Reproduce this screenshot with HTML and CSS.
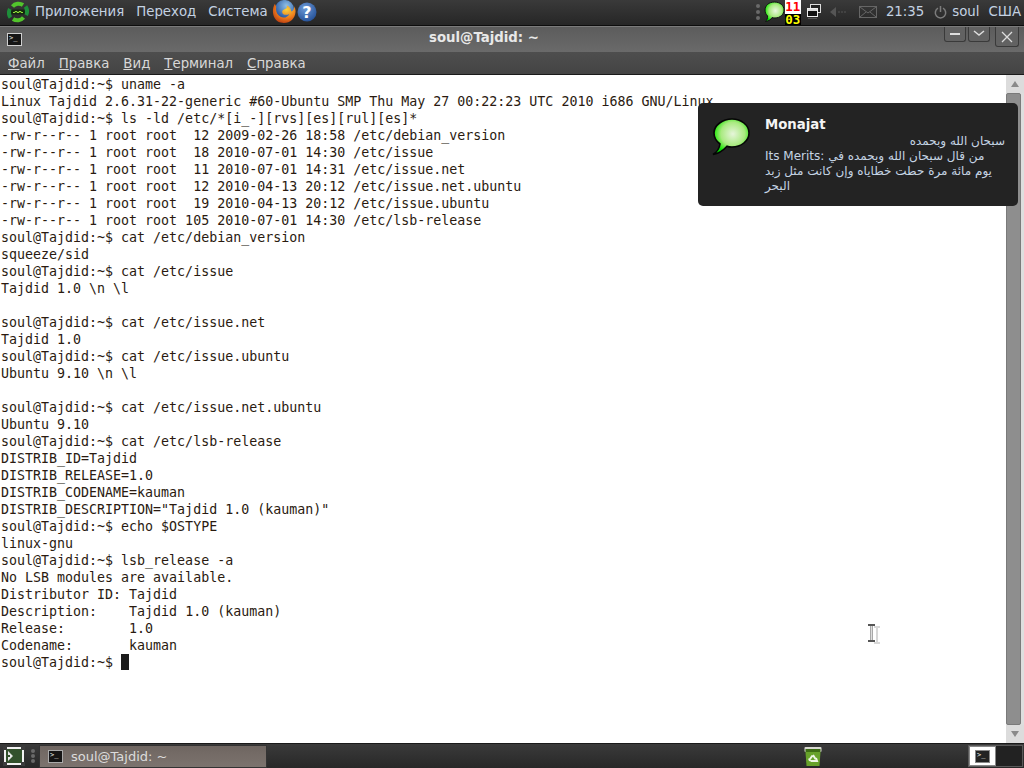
FILE: index.html
```html
<!DOCTYPE html>
<html lang="ru">
<head>
<meta charset="utf-8">
<title>soul@Tajdid: ~</title>
<link rel="stylesheet" href="styles.css">
</head>
<body>
<div class="desktop">
  <header class="top-panel">
    <svg class="logo" width="22" height="22" viewBox="0 0 22 22"><path d="M5.500 5.500A8 8 0 0 1 16 4" fill="none" stroke="#52c42c" stroke-width="4"/><path d="M16.500 16.500A8 8 0 0 1 6 18" fill="none" stroke="#52c42c" stroke-width="4"/><path d="M18.500 5.500A8 8 0 0 1 19 14" fill="none" stroke="#1e8f3a" stroke-width="4"/><path d="M3.500 16.500A8 8 0 0 1 3 8" fill="none" stroke="#1e8f3a" stroke-width="4"/><rect x="4" y="8.500" width="14" height="5" rx="2" fill="#14280f"/><path d="M6 11.500h2v-1h2v1h2v-1h2v1h2" fill="none" stroke="#8fe03a"/></svg>
    <nav class="top-menu"><span>Приложения</span><span>Переход</span><span>Система</span></nav>
    <svg class="launcher" width="25" height="25" viewBox="0 0 26 26"><defs><radialGradient id="ffg" cx="0.6" cy="0.3" r="0.8"><stop offset="0" stop-color="#f9d23c"/><stop offset="0.55" stop-color="#ec7a1c"/><stop offset="1" stop-color="#b2330f"/></radialGradient><radialGradient id="globe" cx="0.6" cy="0.3" r="0.7"><stop offset="0" stop-color="#8fc0e8"/><stop offset="1" stop-color="#1f4f9c"/></radialGradient></defs><circle cx="14" cy="11" r="10" fill="url(#globe)"/><path d="M4 5C0 12 2 22 10 24.500c8 2 15-3 15.500-11 .2-2-.2-4-1.200-6 0 3-1.500 5-3.300 5.500 0-3-2-5.500-5-6.500 1.500 2.500-.5 4-2.500 4.500-2 1-2.500 3-1 4.500 2 1.500 4.500 1 6.500 0-1 3-5.500 5-9 3C6 16.500 4.500 12 5.500 8z" fill="url(#ffg)"/></svg>
    <svg class="launcher help" width="20" height="20" viewBox="0 0 20 20"><defs><radialGradient id="hg" cx="0.4" cy="0.3" r="0.8"><stop offset="0" stop-color="#6d9bd8"/><stop offset="1" stop-color="#1e4a92"/></radialGradient></defs><circle cx="10" cy="10" r="9.500" fill="url(#hg)"/><text x="10" y="15.500" text-anchor="middle" class="help-mark">?</text></svg>
    <div class="tray">
      <span class="grip"><i></i><i></i><i></i></span>
      <svg class="tray-bubble" width="22" height="22" viewBox="0 0 22 22"><defs><radialGradient id="bg1" cx="0.55" cy="0.45" r="0.55"><stop offset="0" stop-color="#eaf7e0"/><stop offset="0.6" stop-color="#a9ea80"/><stop offset="0.92" stop-color="#38e820"/><stop offset="1" stop-color="#00dc00"/></radialGradient></defs><path d="M11.500 1C17 1 21 4.500 21 9s-4 8-9 8c-1 0-2 0-3-.4C8 18.500 6 20 2.500 20.500 4 19 4.600 17.500 4.600 15 3 13.500 2 11.500 2 9 2 4.500 6 1 11.500 1z" fill="url(#bg1)" stroke="#111" stroke-width="1"/></svg>
      <div class="counter"><b class="count-a">11</b><b class="count-b">03</b></div>
      <svg class="tray-icon" width="16" height="16" viewBox="0 0 16 16"><rect x="4.500" y="0.500" width="10" height="8" fill="#222" stroke="#ddd"/><rect x="1.500" y="4.500" width="10" height="8" fill="#111" stroke="#eee"/><rect x="2" y="5" width="9" height="2" fill="#ddd"/><rect x="2" y="14" width="9" height="1" fill="#555"/></svg>
      <svg class="tray-icon arrow-icon" width="18" height="14" viewBox="0 0 18 14"><path d="M1 7l6-5v10z" fill="#555"/><path d="M9 7h2M12 7h2M15 7h2" stroke="#555"/></svg>
      <svg class="tray-icon mail-icon" width="18" height="12" viewBox="0 0 18 12"><rect x="0.500" y="0.500" width="17" height="11" fill="none" stroke="#666"/><path d="M1 1l8 6 8-6M1 11l6-5M17 11l-6-5" fill="none" stroke="#666"/></svg>
      <span class="clock">21:35</span>
      <svg class="power" width="13" height="14" viewBox="0 0 13 14"><path d="M4 3.200a5.200 5.200 0 1 0 5 0M6.500 1v6" fill="none" stroke="#7c7c7c" stroke-width="1.500"/></svg>
      <span class="user">soul</span>
      <span class="layout">США</span>
    </div>
  </header>

  <main class="window">
    <div class="titlebar">
      <span class="win-icon"><span>&gt;_</span></span>
      <h1 class="win-title">soul@Tajdid: ~</h1>
      <div class="win-buttons">
        <span class="win-btn"><svg width="12" height="12" viewBox="0 0 12 12"><path d="M1 6h10" stroke="#ddd" stroke-width="2"/></svg></span>
        <span class="win-btn"><svg width="12" height="12" viewBox="0 0 12 12"><path d="M1 3l5 4 5-4" fill="none" stroke="#ddd" stroke-width="1.500"/></svg></span>
        <span class="win-btn close"><svg width="12" height="12" viewBox="0 0 12 12"><path d="M1 1l10 10M11 1L1 11" stroke="#ddd" stroke-width="1.300"/></svg></span>
      </div>
    </div>
    <div class="menubar">
      <span><u>Ф</u>айл</span><span><u>П</u>равка</span><span><u>В</u>ид</span><span><u>Т</u>ерминал</span><span><u>С</u>правка</span>
    </div>
    <div class="term-area">
<pre class="term">soul@Tajdid:~$ uname -a
Linux Tajdid 2.6.31-22-generic #60-Ubuntu SMP Thu May 27 00:22:23 UTC 2010 i686 GNU/Linux
soul@Tajdid:~$ ls -ld /etc/*[i_-][rvs][es][rul][es]*
-rw-r--r-- 1 root root  12 2009-02-26 18:58 /etc/debian_version
-rw-r--r-- 1 root root  18 2010-07-01 14:30 /etc/issue
-rw-r--r-- 1 root root  11 2010-07-01 14:31 /etc/issue.net
-rw-r--r-- 1 root root  12 2010-04-13 20:12 /etc/issue.net.ubuntu
-rw-r--r-- 1 root root  19 2010-04-13 20:12 /etc/issue.ubuntu
-rw-r--r-- 1 root root 105 2010-07-01 14:30 /etc/lsb-release
soul@Tajdid:~$ cat /etc/debian_version
squeeze/sid
soul@Tajdid:~$ cat /etc/issue
Tajdid 1.0 \n \l

soul@Tajdid:~$ cat /etc/issue.net
Tajdid 1.0
soul@Tajdid:~$ cat /etc/issue.ubuntu
Ubuntu 9.10 \n \l

soul@Tajdid:~$ cat /etc/issue.net.ubuntu
Ubuntu 9.10
soul@Tajdid:~$ cat /etc/lsb-release
DISTRIB_ID=Tajdid
DISTRIB_RELEASE=1.0
DISTRIB_CODENAME=kauman
DISTRIB_DESCRIPTION="Tajdid 1.0 (kauman)"
soul@Tajdid:~$ echo $OSTYPE
linux-gnu
soul@Tajdid:~$ lsb_release -a
No LSB modules are available.
Distributor ID:	Tajdid
Description:	Tajdid 1.0 (kauman)
Release:	1.0
Codename:	kauman
soul@Tajdid:~$ <span class="cursor"> </span></pre>
      <div class="scrollbar">
        <span class="arrow"><svg width="10" height="8" viewBox="0 0 10 8"><path d="M5 1l4 6H1z" fill="#8a8a8a"/></svg></span>
        <span class="thumb"></span>
        <span class="arrow"><svg width="10" height="8" viewBox="0 0 10 8"><path d="M5 7L1 1h8z" fill="#8a8a8a"/></svg></span>
      </div>
    </div>
  </main>

  <footer class="bottom-panel">
    <svg class="show-desktop" width="22" height="20" viewBox="0 0 22 20"><rect x="2" y="2" width="18" height="16" fill="#33512c" stroke="#f2f2f2" stroke-width="2"/><path d="M5 5v4h2v2H5v4l5-5z" fill="#e8e8e8"/><rect x="0" y="0" width="4" height="4" fill="#3c3c3c"/><rect x="18" y="0" width="4" height="4" fill="#3c3c3c"/><rect x="0" y="16" width="4" height="4" fill="#3c3c3c"/><rect x="18" y="16" width="4" height="4" fill="#3c3c3c"/></svg>
    <span class="grip small"><i></i><i></i><i></i></span>
    <div class="task"><span class="win-icon task-icon"><span>&gt;_</span></span><span>soul@Tajdid: ~</span></div>
    <svg class="trash" width="18" height="20" viewBox="0 0 18 20"><rect x="0.500" y="1" width="17" height="5" rx="1" fill="#d9d9d2"/><rect x="1.500" y="3" width="15" height="3" fill="#3d6d14"/><path d="M1.500 6h15l-1 14h-13z" fill="#67a22a"/><path d="M9 9l2.500 4M11.500 15h-5M6 13l2.500-3.500M12 12l1 3h-2.500M6 15l-1-2.500" fill="none" stroke="#eef6e4" stroke-width="2"/></svg>
    <div class="pager"><span class="page active"><span class="win-icon pager-icon"><span>&gt;_</span></span></span><span class="page"></span></div>
  </footer>

  <aside class="notification">
    <svg class="note-icon" width="38" height="39" viewBox="0 0 38 38"><defs><radialGradient id="bg2" cx="0.55" cy="0.42" r="0.55"><stop offset="0" stop-color="#e6f5da"/><stop offset="0.6" stop-color="#a9ea80"/><stop offset="0.88" stop-color="#3ce820"/><stop offset="1" stop-color="#00e000"/></radialGradient></defs><path d="M20 1.500c9 0 17 6 17 14s-8 14-17 14c-2 0-3.500 0-5-.8C12 32 7 36 1 37c4-2.500 6.500-6.500 7-10.500-4-3-6-6.500-6-11C2 7.500 11 1.500 20 1.500z" fill="url(#bg2)" stroke="#050505" stroke-width="1.600"/></svg>
    <div class="note-text">
      <h2>Monajat</h2>
      <p class="rtl-line">سبحان الله وبحمده</p>
      <p class="note-body">Its Merits: من قال سبحان الله وبحمده في يوم مائة مرة حطت خطاياه وإن كانت مثل زبد البحر</p>
    </div>
  </aside>

  <svg class="ibeam" width="16" height="22" viewBox="0 0 16 22"><path d="M8 3h6M11 3v16M8 19h6" transform="translate(0 1)" fill="none" stroke="#d8d8d8" stroke-width="2"/><path d="M2 1h7M5.500 1v16M2 17h7" transform="translate(0 1)" fill="none" stroke="#555" stroke-width="2"/><path d="M5.500 2v14" transform="translate(0 1)" stroke="#ddd"/></svg>
</div>
</body>
</html>
```

FILE: styles.css
```css
* { box-sizing: border-box; }
html, body { margin: 0; padding: 0; }
body { background: #222; font-family: "DejaVu Sans", sans-serif; }
.desktop { position: relative; width: 1024px; height: 768px; display: flex; flex-direction: column; overflow: hidden; }

.top-panel {
  height: 26px; flex: none; display: flex; align-items: center;
  background: linear-gradient(#3a3a3a, #262626);
  border-bottom: 1px solid #0d0d0d;
  color: #c4d2e2; font-size: 13.300px; padding: 0 0 2px 7px;
}
.logo { flex: none; }
.top-menu { display: flex; gap: 12px; margin-left: 6px; }
.launcher { flex: none; margin-left: 3px; }
.help { margin-left: 1px; }
.help-mark { fill: #fff; font: bold 16px "DejaVu Sans", sans-serif; }
.tray { margin-left: auto; display: flex; align-items: center; height: 100%; }
.grip { display: flex; flex-direction: column; gap: 2px; }
.grip i { display: block; width: 4px; height: 4px; border-radius: 50%; background: #6a6a6a; }
.tray-bubble { margin-left: 3px; }
.counter { width: 16px; height: 25px; display: flex; flex-direction: column; font-family: "DejaVu Sans Mono", monospace; font-weight: bold; font-size: 12.500px; text-align: center; align-self: flex-start; }
.count-a { background: #fff; color: #f00; height: 14px; line-height: 14px; }
.count-b { background: #000; color: #ff0; height: 11px; line-height: 11px; }
.tray-icon { margin-left: 5px; flex: none; }
.arrow-icon { margin-left: 7px; }
.mail-icon { margin-left: 12px; }
.clock { margin-left: 9px; }
.power { margin-left: 10px; }
.user { margin-left: 5px; }
.layout { margin-left: 9px; margin-right: 3px; }

.window { flex: 1; display: flex; flex-direction: column; min-height: 0; }
.titlebar {
  height: 26px; flex: none; display: flex; align-items: center; position: relative;
  background: linear-gradient(#5c5c5c, #6a6a6a);
  border-top: 1px solid #7a7a7a; padding: 0 78px 0 7px;
}
.win-icon { display: inline-flex; width: 15px; height: 13px; background: #151515; border: 1px solid #cfcfcf; color: #eee; font: 7px/1 "DejaVu Sans Mono", monospace; padding: 1px; flex: none; }
.win-title { flex: 1; margin: 0 0 3px; text-align: center; font-size: 13.300px; line-height: 16px; font-weight: bold; color: #e8e8e8; }
.win-buttons { display: flex; align-items: flex-start; gap: 2px; position: absolute; right: 5px; top: 0; }
.win-btn { width: 22px; height: 15px; display: flex; align-items: center; justify-content: center; background: #626262; border: 1px solid #3a3a3a; border-top: 0; border-radius: 0 0 3px 3px; }
.win-btn.close { width: 24px; height: 20px; margin-left: 3px; }
.menubar {
  height: 23px; flex: none; display: flex; align-items: center; gap: 14px; padding-left: 8px;
  background: linear-gradient(#4e4e4e, #444);
  border-bottom: 1px solid #1a1a1a;
  color: #d8d8d8; font-size: 13.300px;
}
.term-area { flex: 1; display: flex; min-height: 0; background: #fff; }
.term { flex: 1; margin: 0; padding: 1px 0 0 1px; font-family: "DejaVu Sans Mono", monospace; font-size: 13.300px; line-height: 17px; color: #2a1a10; tab-size: 8; overflow: hidden; white-space: pre; }
.cursor { display: inline-block; width: 8px; height: 16px; background: #1b1b1b; vertical-align: text-bottom; }
.scrollbar { width: 18px; flex: none; display: flex; flex-direction: column; background: #dedede; }
.arrow { height: 18px; flex: none; display: flex; align-items: center; justify-content: center; background: #dcdcdc; }
.thumb { flex: 1; width: 15px; background: #8e8e8e; border: 1px solid #7a7a7a; border-radius: 2px; }

.bottom-panel {
  height: 25px; flex: none; display: flex; align-items: center;
  background: linear-gradient(#3a3a3a, #282828);
  border-top: 1px solid #1a1a1a;
  color: #dcdcdc; font-size: 13px; padding-left: 3px; position: relative;
}
.show-desktop { flex: none; }
.grip.small { margin-left: 6px; gap: 1px; }
.task { width: 228px; height: 23px; margin-left: 4px; display: flex; align-items: center; gap: 8px; padding: 1px 0 0 8px; background: linear-gradient(#6f6661, #7c736e); border: 1px solid #333; }
.task-icon { border-color: #aaa; margin-top: -1px; }
.trash { margin-left: 537px; flex: none; }
.pager { margin-left: auto; display: flex; width: 55px; height: 22px; margin-right: 1px; border: 1px solid #5a5a5a; background: #222; }
.page { flex: 1; display: flex; align-items: center; justify-content: center; }
.page.active { background: #fff; border: 1px solid #888; flex: none; width: 27px; }
.pager-icon { background: #222; border-color: #888; }

.notification {
  position: absolute; left: 698px; top: 103px; width: 320px; height: 103px;
  background: #232323; border-radius: 5px; display: flex; padding: 14px 13px 0 14px; color: #c5d4e3;
  font-size: 12px; line-height: 15px;
}
.note-icon { flex: none; margin-right: 15px; }
.note-text { flex: 1; min-width: 0; }
.note-text h2 { margin: 0 0 2px; font-size: 13.300px; line-height: 15px; color: #f4f4f4; }
.note-text p { margin: 0; }
.rtl-line { direction: rtl; text-align: right; }

.ibeam { position: absolute; left: 866px; top: 623px; }
```
